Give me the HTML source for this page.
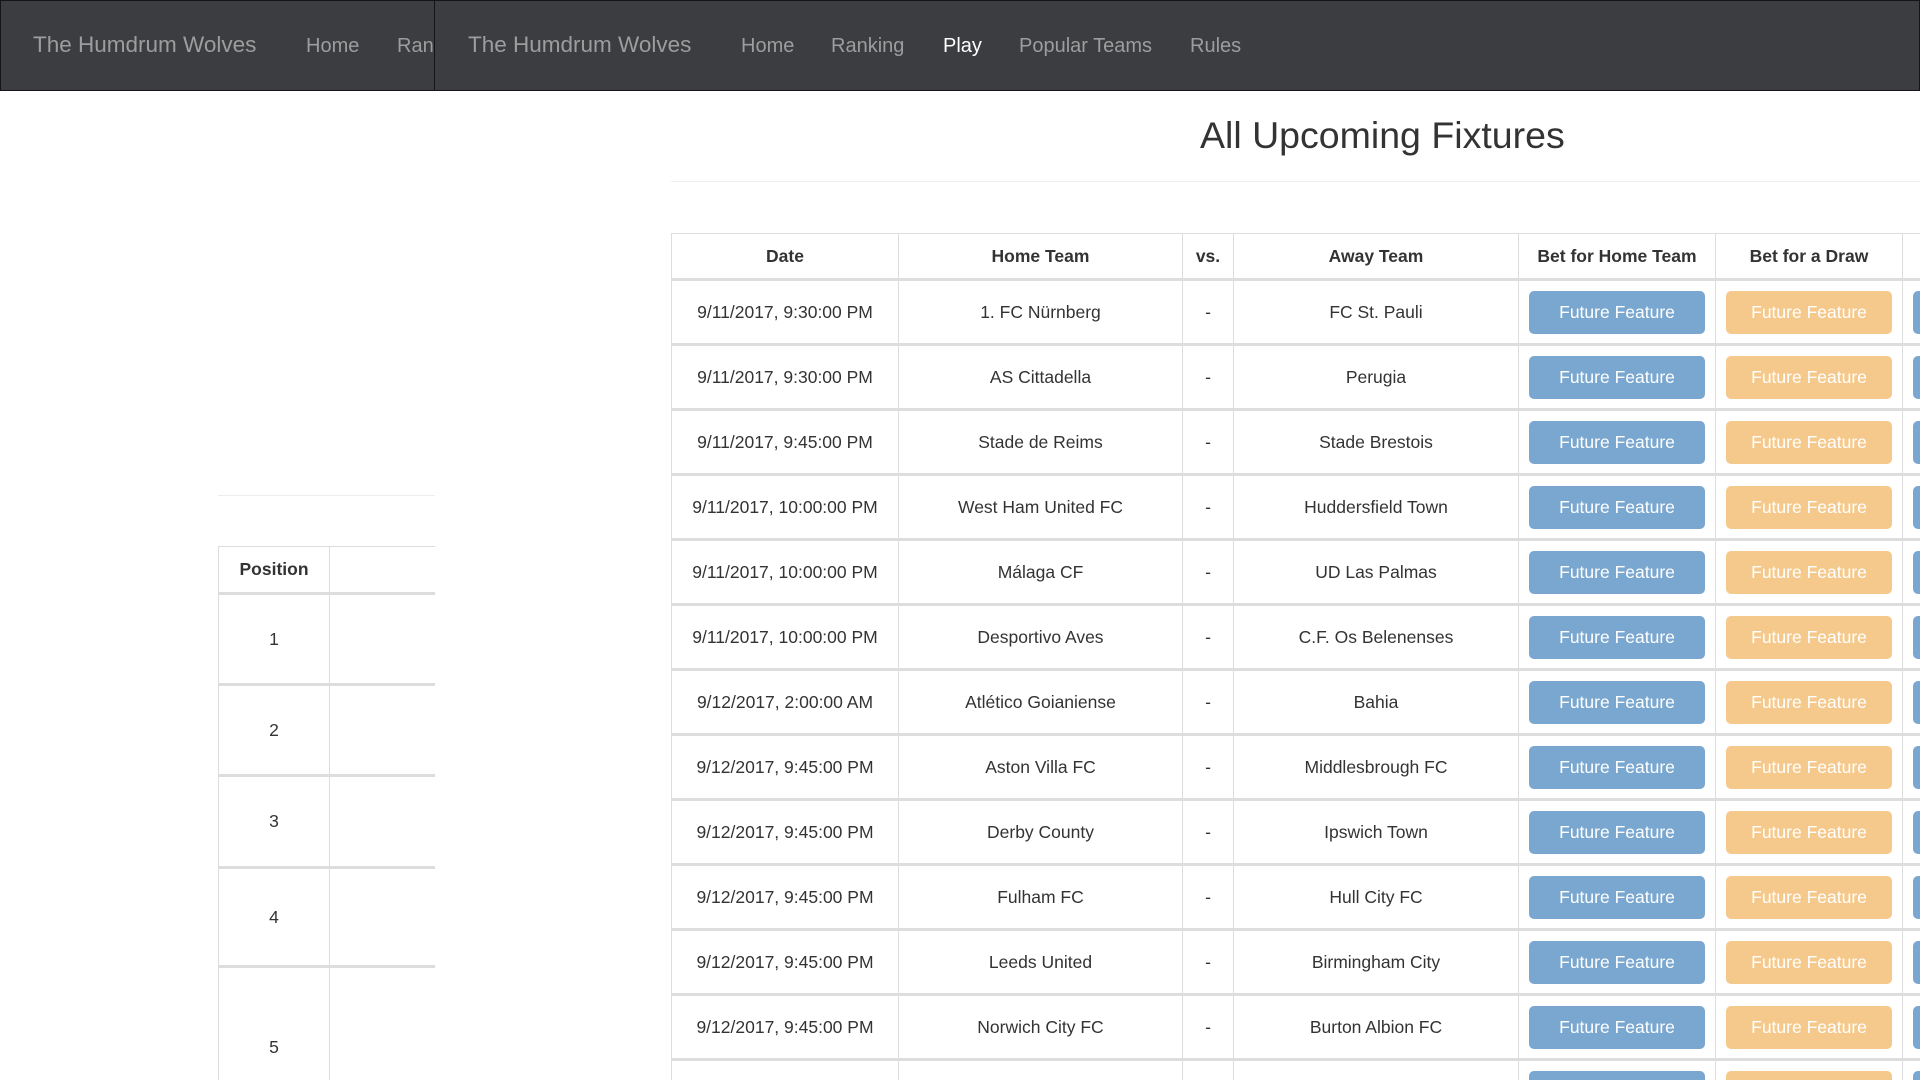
<!DOCTYPE html>
<html><head><meta charset="utf-8"><style>
*{box-sizing:border-box;margin:0;padding:0}
html,body{width:1920px;height:1080px;overflow:hidden}
body{background:#fff;font-family:"Liberation Sans",Arial,sans-serif;color:#333}
#w{position:relative;width:1920px;height:1080px;overflow:hidden}
.nav{position:absolute;top:0;height:91px;background:#3c3d41;border:1px solid #151515}
.nav span{position:absolute;top:34px;font-size:20px;color:#9d9d9d;white-space:nowrap}
.nav .brand{font-size:22.5px;top:31px}
table{border-collapse:collapse;table-layout:fixed;position:absolute}
td,th{border:1px solid #ddd;text-align:center;font-size:17.5px;overflow:hidden;white-space:nowrap}
th{font-weight:bold;border-bottom:3px solid #ddd}
td{border-top:3px solid #ddd}
.b{display:inline-block;height:43px;line-height:43px;border-radius:5px;color:#fff;font-size:17.5px;width:100%;text-align:center}
.bl{background:#7aa7cf}.or{background:#f5c98b}
</style></head><body><div id="w">
<div class="nav" style="left:0;width:1920px">
<span class="brand" style="left:467px">The Humdrum Wolves</span>
<span style="left:740px">Home</span>
<span style="left:830px">Ranking</span>
<span style="left:942px;color:#fff">Play</span>
<span style="left:1018px">Popular Teams</span>
<span style="left:1189px">Rules</span>
</div>
<div class="nav" style="left:0;width:435px;overflow:hidden">
<span class="brand" style="left:32px">The Humdrum Wolves</span>
<span style="left:305px">Home</span>
<span style="left:396px">Ranking</span>
</div>
<div style="position:absolute;left:1200px;top:114px;font-size:37.5px;white-space:nowrap">All Upcoming Fixtures</div>
<div style="position:absolute;left:671px;right:0;top:181px;border-top:1px solid #eee"></div>
<div style="position:absolute;left:218px;width:217px;top:495px;border-top:1px solid #eee"></div>
<div style="position:absolute;left:218px;top:546px;width:217px;height:540px;overflow:hidden">
<table style="left:0;top:0;width:300px">
<colgroup><col style="width:111px"><col style="width:189px"></colgroup>
<tr style="height:47px"><th>Position</th><th></th></tr>
<tr style="height:91px"><td>1</td><td></td></tr>
<tr style="height:91px"><td>2</td><td></td></tr>
<tr style="height:92px"><td>3</td><td></td></tr>
<tr style="height:99px"><td>4</td><td></td></tr>
<tr style="height:160px"><td>5</td><td></td></tr>
</table></div>
<table style="left:671px;top:233px;width:1631px">
<colgroup><col style="width:227px"><col style="width:284px"><col style="width:51px"><col style="width:285px"><col style="width:197px"><col style="width:187px"><col style="width:400px"></colgroup>
<tr style="height:46px"><th>Date</th><th>Home Team</th><th>vs.</th><th>Away Team</th><th>Bet for Home Team</th><th>Bet for a Draw</th><th>Bet for Away Team</th></tr>
<tr style="height:65px"><td>9/11/2017, 9:30:00 PM</td><td>1. FC Nürnberg</td><td>-</td><td>FC St. Pauli</td><td style="padding:0 10px"><span class="b bl">Future Feature</span></td><td style="padding:0 10px"><span class="b or">Future Feature</span></td><td style="padding:0 10px;text-align:left"><span class="b bl" style="width:170px">Future Feature</span></td></tr>
<tr style="height:65px"><td>9/11/2017, 9:30:00 PM</td><td>AS Cittadella</td><td>-</td><td>Perugia</td><td style="padding:0 10px"><span class="b bl">Future Feature</span></td><td style="padding:0 10px"><span class="b or">Future Feature</span></td><td style="padding:0 10px;text-align:left"><span class="b bl" style="width:170px">Future Feature</span></td></tr>
<tr style="height:65px"><td>9/11/2017, 9:45:00 PM</td><td>Stade de Reims</td><td>-</td><td>Stade Brestois</td><td style="padding:0 10px"><span class="b bl">Future Feature</span></td><td style="padding:0 10px"><span class="b or">Future Feature</span></td><td style="padding:0 10px;text-align:left"><span class="b bl" style="width:170px">Future Feature</span></td></tr>
<tr style="height:65px"><td>9/11/2017, 10:00:00 PM</td><td>West Ham United FC</td><td>-</td><td>Huddersfield Town</td><td style="padding:0 10px"><span class="b bl">Future Feature</span></td><td style="padding:0 10px"><span class="b or">Future Feature</span></td><td style="padding:0 10px;text-align:left"><span class="b bl" style="width:170px">Future Feature</span></td></tr>
<tr style="height:65px"><td>9/11/2017, 10:00:00 PM</td><td>Málaga CF</td><td>-</td><td>UD Las Palmas</td><td style="padding:0 10px"><span class="b bl">Future Feature</span></td><td style="padding:0 10px"><span class="b or">Future Feature</span></td><td style="padding:0 10px;text-align:left"><span class="b bl" style="width:170px">Future Feature</span></td></tr>
<tr style="height:65px"><td>9/11/2017, 10:00:00 PM</td><td>Desportivo Aves</td><td>-</td><td>C.F. Os Belenenses</td><td style="padding:0 10px"><span class="b bl">Future Feature</span></td><td style="padding:0 10px"><span class="b or">Future Feature</span></td><td style="padding:0 10px;text-align:left"><span class="b bl" style="width:170px">Future Feature</span></td></tr>
<tr style="height:65px"><td>9/12/2017, 2:00:00 AM</td><td>Atlético Goianiense</td><td>-</td><td>Bahia</td><td style="padding:0 10px"><span class="b bl">Future Feature</span></td><td style="padding:0 10px"><span class="b or">Future Feature</span></td><td style="padding:0 10px;text-align:left"><span class="b bl" style="width:170px">Future Feature</span></td></tr>
<tr style="height:65px"><td>9/12/2017, 9:45:00 PM</td><td>Aston Villa FC</td><td>-</td><td>Middlesbrough FC</td><td style="padding:0 10px"><span class="b bl">Future Feature</span></td><td style="padding:0 10px"><span class="b or">Future Feature</span></td><td style="padding:0 10px;text-align:left"><span class="b bl" style="width:170px">Future Feature</span></td></tr>
<tr style="height:65px"><td>9/12/2017, 9:45:00 PM</td><td>Derby County</td><td>-</td><td>Ipswich Town</td><td style="padding:0 10px"><span class="b bl">Future Feature</span></td><td style="padding:0 10px"><span class="b or">Future Feature</span></td><td style="padding:0 10px;text-align:left"><span class="b bl" style="width:170px">Future Feature</span></td></tr>
<tr style="height:65px"><td>9/12/2017, 9:45:00 PM</td><td>Fulham FC</td><td>-</td><td>Hull City FC</td><td style="padding:0 10px"><span class="b bl">Future Feature</span></td><td style="padding:0 10px"><span class="b or">Future Feature</span></td><td style="padding:0 10px;text-align:left"><span class="b bl" style="width:170px">Future Feature</span></td></tr>
<tr style="height:65px"><td>9/12/2017, 9:45:00 PM</td><td>Leeds United</td><td>-</td><td>Birmingham City</td><td style="padding:0 10px"><span class="b bl">Future Feature</span></td><td style="padding:0 10px"><span class="b or">Future Feature</span></td><td style="padding:0 10px;text-align:left"><span class="b bl" style="width:170px">Future Feature</span></td></tr>
<tr style="height:65px"><td>9/12/2017, 9:45:00 PM</td><td>Norwich City FC</td><td>-</td><td>Burton Albion FC</td><td style="padding:0 10px"><span class="b bl">Future Feature</span></td><td style="padding:0 10px"><span class="b or">Future Feature</span></td><td style="padding:0 10px;text-align:left"><span class="b bl" style="width:170px">Future Feature</span></td></tr>
<tr style="height:65px"><td>9/12/2017, 9:45:00 PM</td><td>Nottingham Forest</td><td>-</td><td>Bolton Wanderers</td><td style="padding:0 10px"><span class="b bl">Future Feature</span></td><td style="padding:0 10px"><span class="b or">Future Feature</span></td><td style="padding:0 10px;text-align:left"><span class="b bl" style="width:170px">Future Feature</span></td></tr>
</table>
</div></body></html>
